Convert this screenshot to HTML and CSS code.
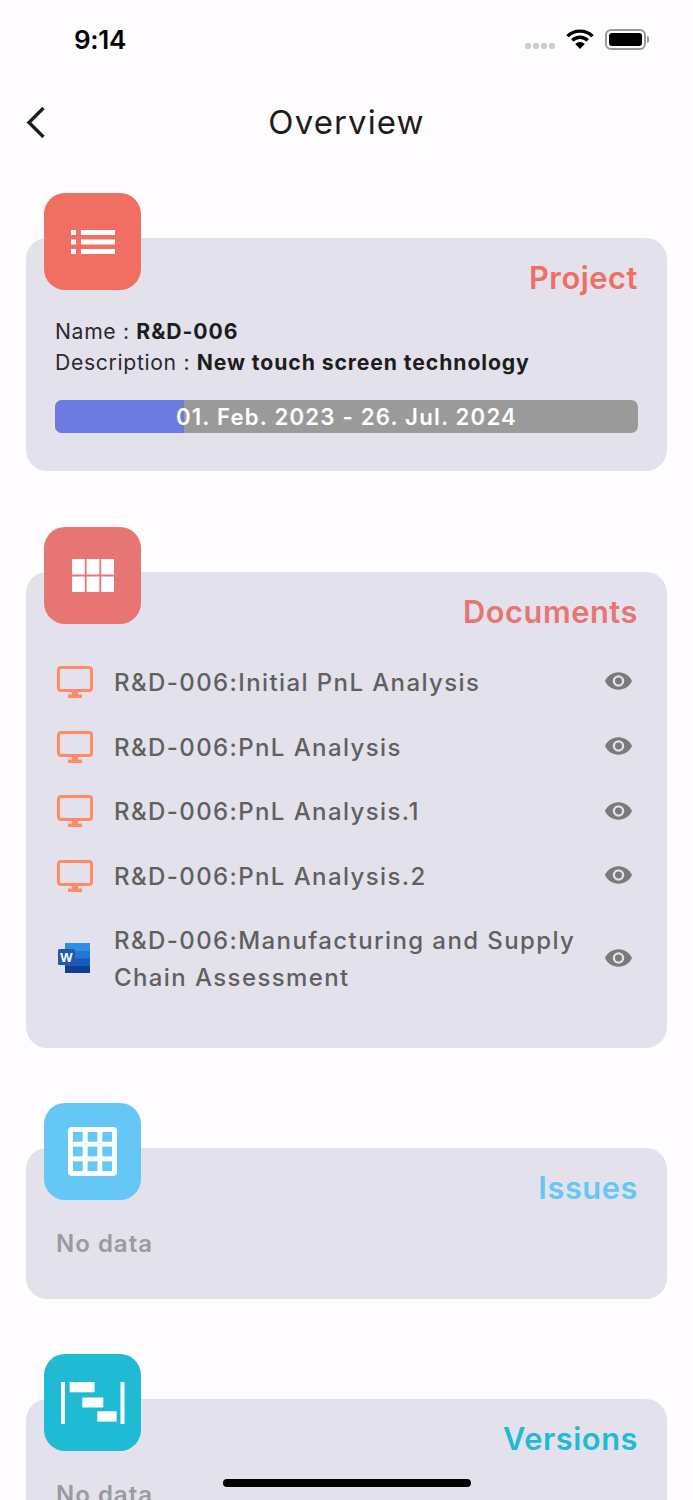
FILE: index.html
```html
<!DOCTYPE html>
<html lang="en">
<head>
<meta charset="utf-8">
<title>Overview</title>
<link rel="stylesheet" href="styles.css">
</head>
<body>
<div class="screen">
  <header class="status">
    <span class="time">9:14</span>
    <div class="status-icons">
      <span class="signal"><i></i><i></i><i></i><i></i></span>
      <svg class="wifi" width="28" height="20" viewBox="0 0 28 20"><path d="M1.500 7.200A18 18 0 0 1 26.500 7.200" fill="none" stroke="#000" stroke-width="3.400"/><path d="M6.300 11.400A11 11 0 0 1 21.700 11.400" fill="none" stroke="#000" stroke-width="3.400"/><path d="M9.200 15L14 20L18.800 15A7 7 0 0 0 9.200 15Z" fill="#000"/></svg>
      <span class="battery"><span class="battery-fill"></span></span><span class="battery-tip"></span>
    </div>
  </header>
  <nav class="nav">
    <svg class="back" width="20" height="32" viewBox="0 0 20 32"><path d="M17.500 2L3 16.500L17.500 31" fill="none" stroke="#1d1d20" stroke-width="3.400"/></svg>
    <h1 class="nav-title">Overview</h1>
  </nav>
  <main class="content">
    <section class="section section-project">
      <div class="badge badge-project">
        <svg width="44" height="24" viewBox="0 0 44 24" fill="#fff"><rect x="0" y="0" width="5" height="5"/><rect x="10" y="0" width="34" height="5"/><rect x="0" y="9.500" width="5" height="5"/><rect x="10" y="9.500" width="34" height="5"/><rect x="0" y="19" width="5" height="5"/><rect x="10" y="19" width="34" height="5"/></svg>
      </div>
      <div class="card card-project">
        <h2 class="card-title title-project">Project</h2>
        <p class="meta meta-name">Name : <b>R&amp;D-006</b></p>
        <p class="meta">Description : <b>New touch screen technology</b></p>
        <div class="progress">
          <div class="progress-fill"></div>
          <span class="progress-label">01. Feb. 2023 - 26. Jul. 2024</span>
        </div>
      </div>
    </section>

    <section class="section">
      <div class="badge badge-docs">
        <svg width="42" height="33" viewBox="0 0 42 33" fill="#fff"><rect x="0" y="0" width="12.800" height="15.500"/><rect x="14.600" y="0" width="12.800" height="15.500"/><rect x="29.200" y="0" width="12.800" height="15.500"/><rect x="0" y="17.500" width="12.800" height="15.500"/><rect x="14.600" y="17.500" width="12.800" height="15.500"/><rect x="29.200" y="17.500" width="12.800" height="15.500"/></svg>
      </div>
      <div class="card card-docs">
        <h2 class="card-title title-docs">Documents</h2>
        <ul class="doc-list">
          <li class="doc">
            <svg class="doc-icon" width="36" height="32" viewBox="0 0 36 32"><rect x="1.500" y="1.500" width="33" height="23" rx="2.500" fill="none" stroke="#ff8a65" stroke-width="3"/><rect x="15" y="25" width="6" height="4" fill="#ff8a65"/><rect x="11" y="28.500" width="14" height="3.500" fill="#ff8a65"/></svg>
            <span class="doc-name">R&amp;D-006:Initial PnL Analysis</span>
            <svg class="eye" width="27" height="18" viewBox="0 0 28 18"><path fill="#7a7a7a" fill-rule="evenodd" d="M14 0C7.600 0 2.300 3.700 0 9c2.300 5.300 7.600 9 14 9s11.700-3.700 14-9C25.700 3.700 20.400 0 14 0zm0 15a6 6 0 1 1 0-12 6 6 0 0 1 0 12zm0-9.600a3.600 3.600 0 1 0 0 7.200 3.600 3.600 0 0 0 0-7.200z"/></svg>
          </li>
          <li class="doc">
            <svg class="doc-icon" width="36" height="32" viewBox="0 0 36 32"><rect x="1.500" y="1.500" width="33" height="23" rx="2.500" fill="none" stroke="#ff8a65" stroke-width="3"/><rect x="15" y="25" width="6" height="4" fill="#ff8a65"/><rect x="11" y="28.500" width="14" height="3.500" fill="#ff8a65"/></svg>
            <span class="doc-name">R&amp;D-006:PnL Analysis</span>
            <svg class="eye" width="27" height="18" viewBox="0 0 28 18"><path fill="#7a7a7a" fill-rule="evenodd" d="M14 0C7.600 0 2.300 3.700 0 9c2.300 5.300 7.600 9 14 9s11.700-3.700 14-9C25.700 3.700 20.400 0 14 0zm0 15a6 6 0 1 1 0-12 6 6 0 0 1 0 12zm0-9.600a3.600 3.600 0 1 0 0 7.200 3.600 3.600 0 0 0 0-7.200z"/></svg>
          </li>
          <li class="doc">
            <svg class="doc-icon" width="36" height="32" viewBox="0 0 36 32"><rect x="1.500" y="1.500" width="33" height="23" rx="2.500" fill="none" stroke="#ff8a65" stroke-width="3"/><rect x="15" y="25" width="6" height="4" fill="#ff8a65"/><rect x="11" y="28.500" width="14" height="3.500" fill="#ff8a65"/></svg>
            <span class="doc-name">R&amp;D-006:PnL Analysis.1</span>
            <svg class="eye" width="27" height="18" viewBox="0 0 28 18"><path fill="#7a7a7a" fill-rule="evenodd" d="M14 0C7.600 0 2.300 3.700 0 9c2.300 5.300 7.600 9 14 9s11.700-3.700 14-9C25.700 3.700 20.400 0 14 0zm0 15a6 6 0 1 1 0-12 6 6 0 0 1 0 12zm0-9.600a3.600 3.600 0 1 0 0 7.200 3.600 3.600 0 0 0 0-7.200z"/></svg>
          </li>
          <li class="doc">
            <svg class="doc-icon" width="36" height="32" viewBox="0 0 36 32"><rect x="1.500" y="1.500" width="33" height="23" rx="2.500" fill="none" stroke="#ff8a65" stroke-width="3"/><rect x="15" y="25" width="6" height="4" fill="#ff8a65"/><rect x="11" y="28.500" width="14" height="3.500" fill="#ff8a65"/></svg>
            <span class="doc-name">R&amp;D-006:PnL Analysis.2</span>
            <svg class="eye" width="27" height="18" viewBox="0 0 28 18"><path fill="#7a7a7a" fill-rule="evenodd" d="M14 0C7.600 0 2.300 3.700 0 9c2.300 5.300 7.600 9 14 9s11.700-3.700 14-9C25.700 3.700 20.400 0 14 0zm0 15a6 6 0 1 1 0-12 6 6 0 0 1 0 12zm0-9.600a3.600 3.600 0 1 0 0 7.200 3.600 3.600 0 0 0 0-7.200z"/></svg>
          </li>
          <li class="doc doc-tall">
            <svg class="doc-icon" width="36" height="32" viewBox="0 0 36 32"><rect x="8" y="1" width="25" height="30" rx="1.500" fill="#185abd"/><rect x="8" y="1" width="25" height="8" fill="#2b8fe8"/><rect x="8" y="9" width="25" height="7.500" fill="#2476d2"/><rect x="8" y="24" width="25" height="7" fill="#103f91"/><rect x="1" y="7" width="17" height="16" rx="1.500" fill="#2559a8"/><text x="9.500" y="20" class="word-w">W</text></svg>
            <span class="doc-name">R&amp;D-006:Manufacturing and Supply Chain Assessment</span>
            <svg class="eye" width="27" height="18" viewBox="0 0 28 18"><path fill="#7a7a7a" fill-rule="evenodd" d="M14 0C7.600 0 2.300 3.700 0 9c2.300 5.300 7.600 9 14 9s11.700-3.700 14-9C25.700 3.700 20.400 0 14 0zm0 15a6 6 0 1 1 0-12 6 6 0 0 1 0 12zm0-9.600a3.600 3.600 0 1 0 0 7.200 3.600 3.600 0 0 0 0-7.200z"/></svg>
          </li>
        </ul>
      </div>
    </section>

    <section class="section">
      <div class="badge badge-issues">
        <svg width="49" height="49" viewBox="0 0 50 50"><rect width="50" height="50" rx="4" fill="#fff"/><g fill="#64c7f5"><rect x="5" y="5" width="10" height="10"/><rect x="20" y="5" width="10" height="10"/><rect x="35" y="5" width="10" height="10"/><rect x="5" y="20" width="10" height="10"/><rect x="20" y="20" width="10" height="10"/><rect x="35" y="20" width="10" height="10"/><rect x="5" y="35" width="10" height="10"/><rect x="20" y="35" width="10" height="10"/><rect x="35" y="35" width="10" height="10"/></g></svg>
      </div>
      <div class="card card-empty">
        <h2 class="card-title title-issues">Issues</h2>
        <p class="no-data">No data</p>
      </div>
    </section>

    <section class="section">
      <div class="badge badge-versions">
        <svg width="64" height="42" viewBox="0 0 64 42" fill="#fff"><rect x="0" y="0" width="4" height="42"/><rect x="59.500" y="0" width="4" height="42"/><rect x="8.600" y="0" width="25" height="10.300"/><rect x="21.300" y="15.500" width="21" height="10"/><rect x="36.300" y="29.300" width="19.300" height="10.300"/></svg>
      </div>
      <div class="card card-empty">
        <h2 class="card-title title-versions">Versions</h2>
        <p class="no-data">No data</p>
      </div>
    </section>
  </main>
  <div class="home-indicator"></div>
</div>
</body>
</html>
```
FILE: styles.css
```css
* { box-sizing: border-box; }
html, body { margin: 0; padding: 0; }
body {
  background: #fefcff;
  font-family: Inter, "Liberation Sans", sans-serif;
  color: #1d1d20;
}
.screen {
  position: relative;
  width: 693px;
  height: 1500px;
  overflow: hidden;
}
.status {
  height: 78px;
  display: flex;
  justify-content: space-between;
  align-items: center;
  padding: 0 44px 0 74px;
}
.time {
  font-size: 26px;
  font-weight: 600;
  color: #000;
  letter-spacing: -0.3px;
}
.status-icons { display: flex; align-items: center; }
.signal { display: flex; gap: 2px; margin: 14px 11px 0 0; }
.signal i {
  width: 6px;
  height: 6px;
  border-radius: 2px;
  background: #cfcfcf;
}
.wifi { margin-right: 11px; }
.battery {
  width: 41px;
  height: 21px;
  padding: 2px;
  border: 2px solid #9a9a9a;
  border-radius: 6px;
  display: block;
}
.battery-fill {
  display: block;
  height: 100%;
  background: #000;
  border-radius: 3px;
}
.battery-tip {
  width: 2px;
  height: 7px;
  margin-left: 1px;
  background: #9a9a9a;
  border-radius: 0 2px 2px 0;
}
.nav {
  position: relative;
  height: 88px;
  display: flex;
  align-items: center;
  justify-content: center;
}
.back { position: absolute; left: 26px; top: 28px; }
.nav-title {
  margin: 0;
  font-size: 33px;
  font-weight: 400;
  letter-spacing: 1.100px;
}
.content {
  padding: 27px 26px 0;
  display: flex;
  flex-direction: column;
  gap: 55px;
}
.section { position: relative; padding-top: 45px; }
.section-project { margin-bottom: 1px; }
.badge {
  position: absolute;
  left: 18px;
  top: 0;
  width: 97px;
  height: 97px;
  border-radius: 21px;
  display: flex;
  align-items: center;
  justify-content: center;
}
.badge-project { background: #f16e63; }
.badge-docs { background: #e77574; }
.badge-issues { background: #64c7f5; }
.badge-versions { background: #1fbad3; }
.card {
  background: #e3e2ec;
  border-radius: 21px;
  padding: 0 29px;
}
.card-project { height: 233px; }
.card-docs { height: 476px; }
.card-empty { height: 151px; }
.card-title {
  margin: 0;
  padding-top: 22px;
  text-align: right;
  font-size: 30.800px;
  line-height: 35px;
  font-weight: 600;
  letter-spacing: 0.550px;
}
.title-project { color: #f16e63; }
.title-docs { color: #e77574; }
.title-issues { color: #64c7f5; }
.title-versions { color: #1fbad3; }
.meta {
  margin: 0;
  font-size: 21.200px;
  line-height: 31px;
  letter-spacing: 0.650px;
  color: #2a2a30;
}
.meta b { font-weight: 700; letter-spacing: 0.900px; color: #1d1d20; }
.meta-name { margin-top: 21px; }
.progress {
  position: relative;
  margin-top: 22px;
  height: 33px;
  background: #9a9a9a;
  border-radius: 7px;
  overflow: hidden;
  display: flex;
  align-items: center;
  justify-content: center;
}
.progress-fill {
  position: absolute;
  left: 0;
  top: 0;
  bottom: 0;
  width: 22.100%;
  background: #6b7bdf;
}
.progress-label {
  position: relative;
  color: #fff;
  font-size: 22.200px;
  font-weight: 600;
  letter-spacing: 1.200px;
}
.doc-list {
  list-style: none;
  margin: 21px 0 0;
  padding: 0;
}
.doc {
  display: flex;
  align-items: center;
  height: 64.700px;
  margin-left: 2px;
}
.doc-tall { height: 100px; }
.doc-icon { flex: none; margin: 0 21px 1px 0; }
.doc-name {
  flex: 1;
  min-width: 0;
  font-size: 24px;
  line-height: 37px;
  font-weight: 500;
  letter-spacing: 1.400px;
  color: #606060;
}
.eye { flex: none; margin: 0 6px 2px 18px; }
.word-w {
  fill: #fff;
  font-family: "Liberation Sans", sans-serif;
  font-size: 13px;
  font-weight: 700;
  text-anchor: middle;
}
.no-data {
  margin: 23px 0 0 1px;
  font-size: 24px;
  line-height: 32px;
  font-weight: 600;
  letter-spacing: 1px;
  color: #9a9a9f;
}
.home-indicator {
  position: absolute;
  left: 223px;
  top: 1479px;
  width: 248px;
  height: 8px;
  border-radius: 4px;
  background: #000;
}
```
